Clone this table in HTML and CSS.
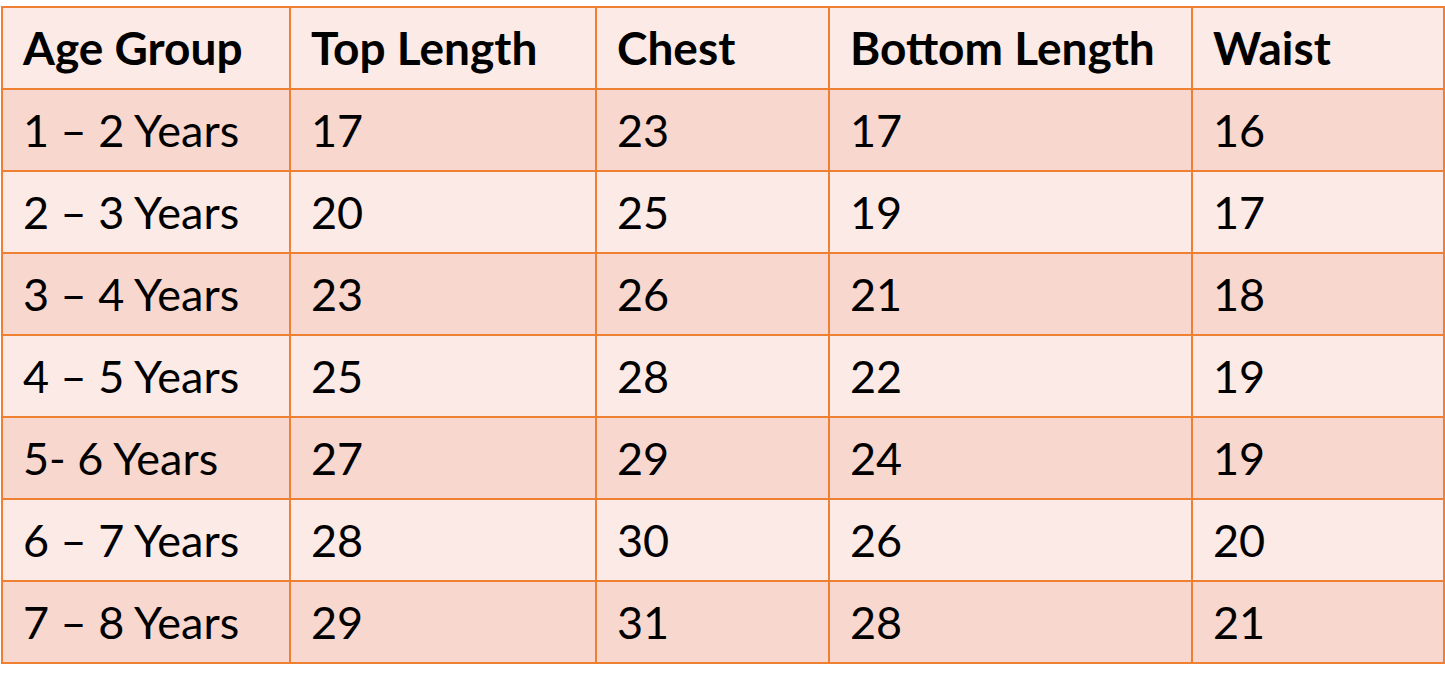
FILE: index.html
```html
<!DOCTYPE html>
<html>
<head>
<meta charset="utf-8">
<link rel="stylesheet" href="styles.css">
</head>
<body>
<table class="size-table">
  <colgroup>
    <col class="c1"><col class="c2"><col class="c3"><col class="c4"><col class="c5">
  </colgroup>
  <thead>
    <tr class="head"><th>Age Group</th><th>Top Length</th><th>Chest</th><th>Bottom Length</th><th>Waist</th></tr>
  </thead>
  <tbody>
    <tr class="dark"><td>1 – 2 Years</td><td>17</td><td>23</td><td>17</td><td>16</td></tr>
    <tr class="light"><td>2 – 3 Years</td><td>20</td><td>25</td><td>19</td><td>17</td></tr>
    <tr class="dark"><td>3 – 4 Years</td><td>23</td><td>26</td><td>21</td><td>18</td></tr>
    <tr class="light"><td>4 – 5 Years</td><td>25</td><td>28</td><td>22</td><td>19</td></tr>
    <tr class="dark"><td>5- 6 Years</td><td>27</td><td>29</td><td>24</td><td>19</td></tr>
    <tr class="light"><td>6 – 7 Years</td><td>28</td><td>30</td><td>26</td><td>20</td></tr>
    <tr class="dark"><td>7 – 8 Years</td><td>29</td><td>31</td><td>28</td><td>21</td></tr>
  </tbody>
</table>
</body>
</html>
```
FILE: styles.css
```css
html, body {
  margin: 0;
  padding: 0;
  background: #ffffff;
}

.size-table {
  margin: 6px 0 0 1px;
  border-collapse: collapse;
  table-layout: fixed;
  width: 1442px;
  font-family: Lato, "Open Sans", sans-serif;
  font-size: 45px;
  color: #000;
}

.c1 { width: 288px; }
.c2 { width: 306px; }
.c3 { width: 233px; }
.c4 { width: 363px; }
.c5 { width: 252px; }

.size-table th,
.size-table td {
  border: 2px solid #ee7f33;
  height: 80px;
  padding: 0 0 0 20px;
  text-align: left;
  vertical-align: middle;
  white-space: nowrap;
  line-height: 1;
}

.size-table th {
  font-weight: 700;
  font-size: 46px;
}

.size-table td {
  font-weight: 400;
}

.head, .light { background: #fbeae6; }
.dark { background: #f8d7ce; }
```
